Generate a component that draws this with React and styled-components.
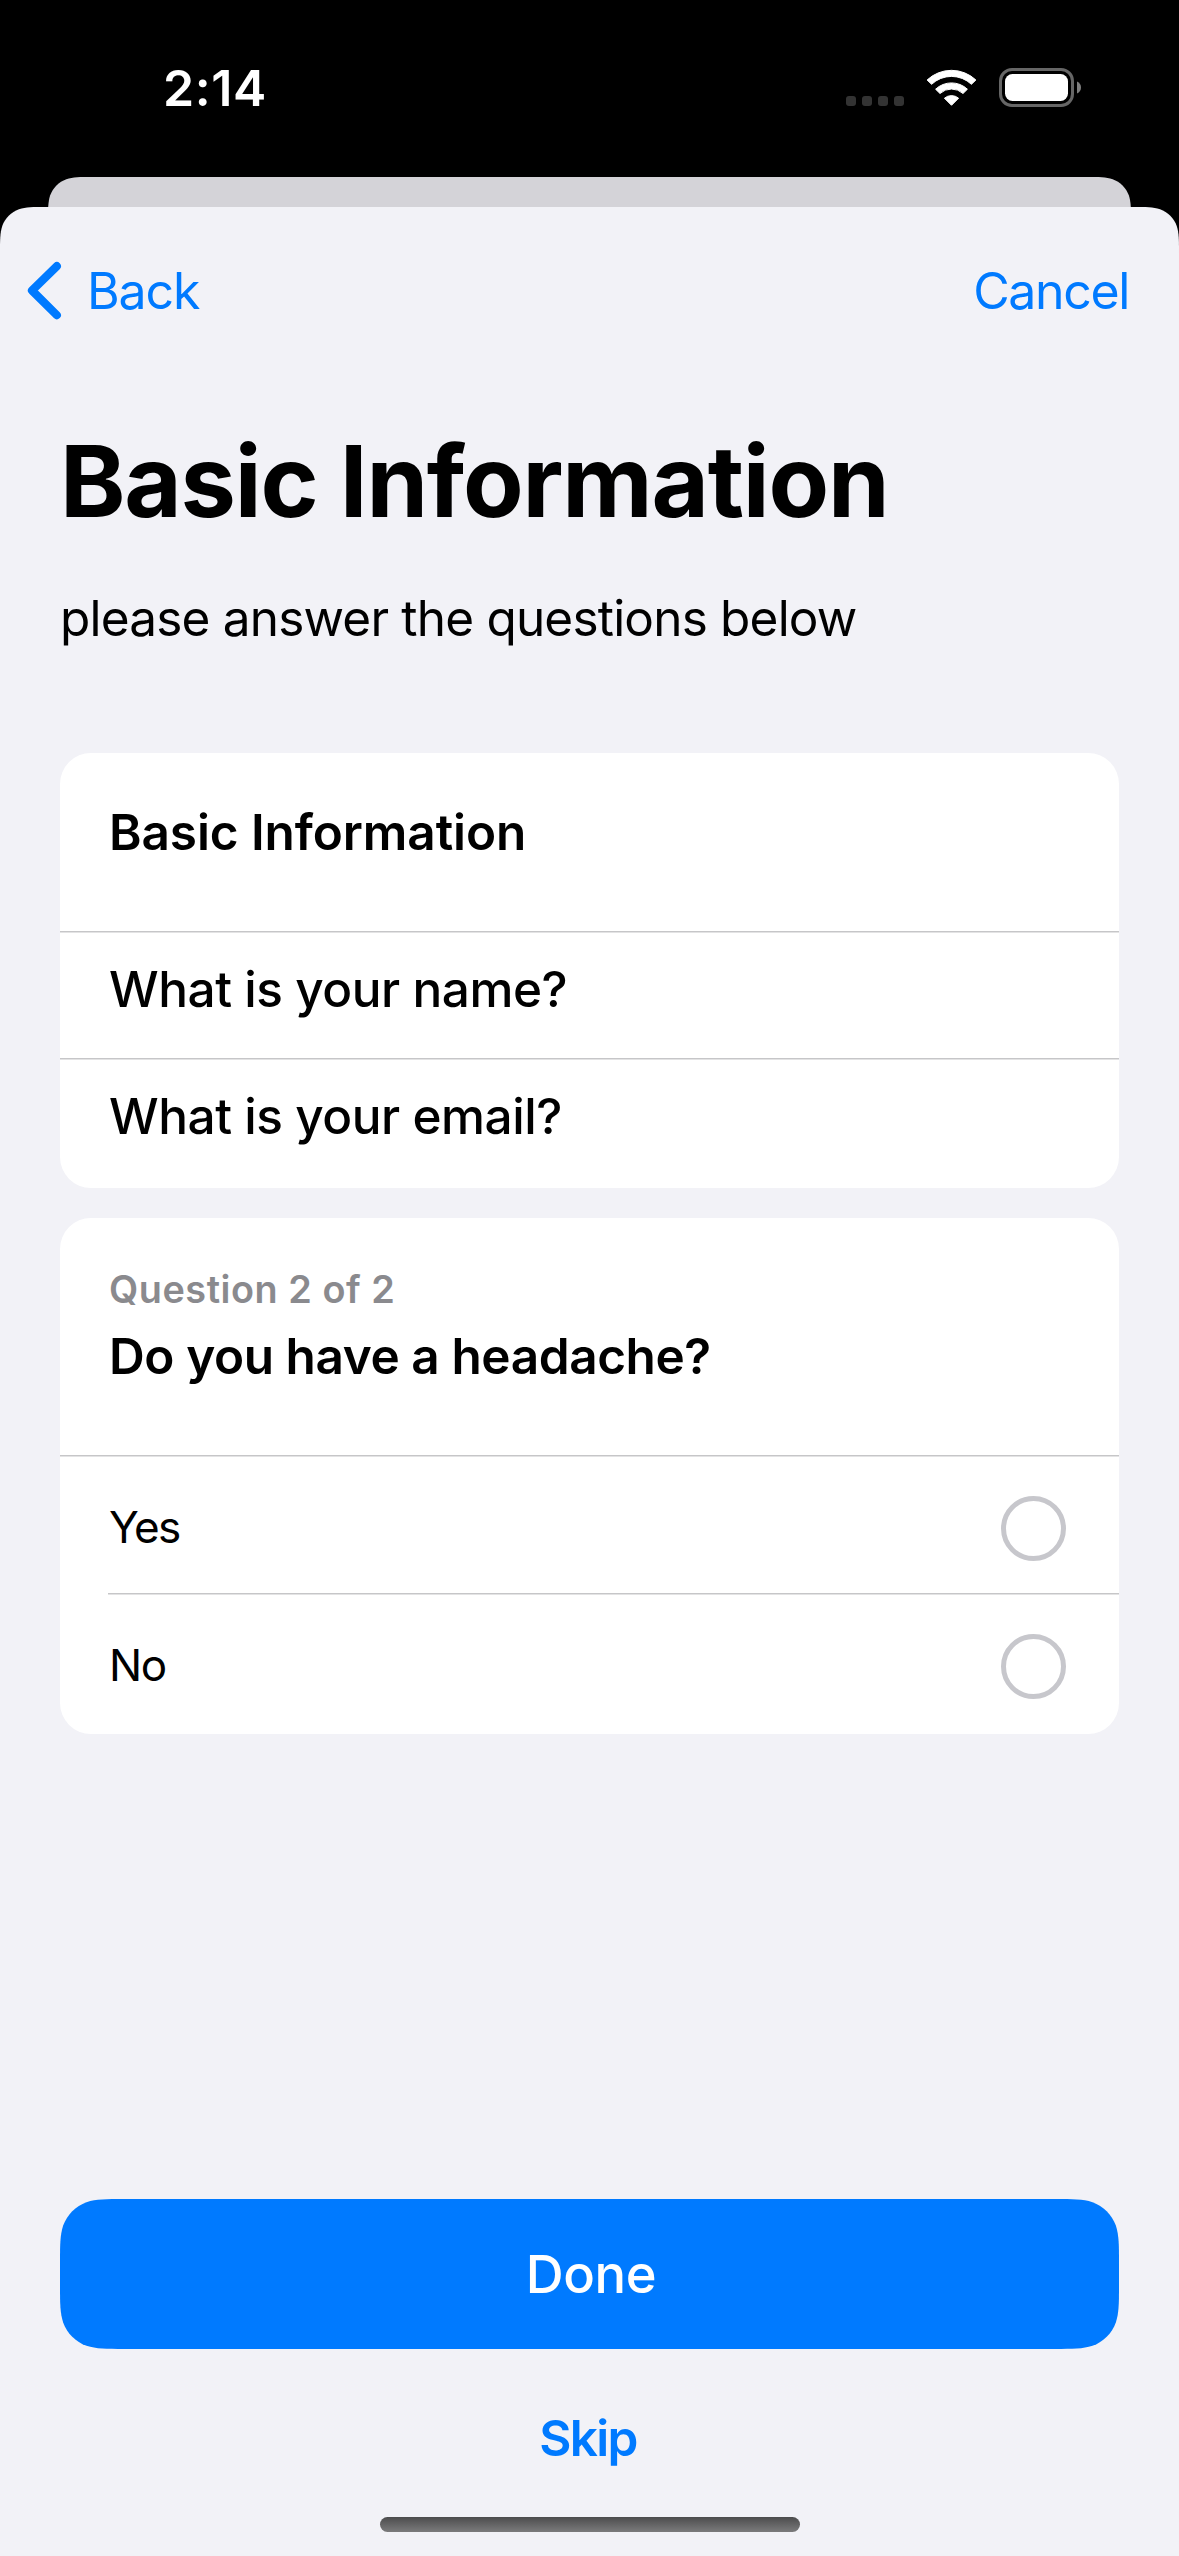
import React from "react";
import styled, { createGlobalStyle, css } from "styled-components";

const blue = "#007aff";
const sheetGrey = "#f2f2f7";

const GlobalStyle = createGlobalStyle`
  * { box-sizing: border-box; }
  body {
    margin: 0;
    background: #000;
    font-family: Inter, "Liberation Sans", sans-serif;
    color: #000;
  }
  h1, h2, p { margin: 0; font-weight: inherit; }
  button { font: inherit; border: 0; padding: 0; margin: 0; background: none; }
`;

// Rounded rectangle whose corners ease into the edges.
const smoothCorners = (w, h, r, roundBottom) => {
  const a = 1.528665 * r;
  const b = 1.08849296 * r;
  const c = 0.86840694 * r;
  const d = 0.63149379 * r;
  const e = 0.37282383 * r;
  const f = 0.16905956 * r;
  const g = 0.07491139 * r;
  const top =
    `M0 ${a}C0 ${b} 0 ${c} ${g} ${d}C${f} ${e} ${e} ${f} ${d} ${g}C${c} 0 ${b} 0 ${a} 0` +
    `L${w - a} 0C${w - b} 0 ${w - c} 0 ${w - d} ${g}C${w - e} ${f} ${w - f} ${e} ${w - g} ${d}C${w} ${c} ${w} ${b} ${w} ${a}`;
  const bottom = roundBottom
    ? `L${w} ${h - a}C${w} ${h - b} ${w} ${h - c} ${w - g} ${h - d}C${w - f} ${h - e} ${w - e} ${h - f} ${w - d} ${h - g}C${w - c} ${h} ${w - b} ${h} ${w - a} ${h}` +
      `L${a} ${h}C${b} ${h} ${c} ${h} ${d} ${h - g}C${e} ${h - f} ${f} ${h - e} ${g} ${h - d}C0 ${h - c} 0 ${h - b} 0 ${h - a}Z`
    : `L${w} ${h}L0 ${h}Z`;
  return css`clip-path: path("${top + bottom}");`;
};

const Screen = styled.div`
  width: 1179px;
  height: 2556px;
  display: flex;
  flex-direction: column;
  background: #000;
  overflow: hidden;
`;

const StatusBar = styled.header`
  height: 177px;
  flex: none;
  display: flex;
  justify-content: space-between;
  align-items: center;
  padding: 0 98px 1px 163px;
  color: #fff;
`;

const Clock = styled.time`
  font-size: 50px;
  font-weight: 600;
  line-height: 60px;
  letter-spacing: 0.6px;
`;

const StatusIcons = styled.div`
  display: flex;
  align-items: center;
`;

const SheetBehind = styled.div`
  height: 30px;
  flex: none;
  margin: 0 48px;
  background: #d4d3d8;
  ${smoothCorners(1083, 90, 29, false)}
`;

const Sheet = styled.main`
  flex: 1;
  display: flex;
  flex-direction: column;
  background: ${sheetGrey};
  ${smoothCorners(1179, 2349, 30, false)}
`;

const NavBar = styled.nav`
  height: 168px;
  flex: none;
  display: flex;
  justify-content: space-between;
  align-items: center;
  padding: 0 50px 0 27px;
`;

const NavButton = styled.button`
  display: flex;
  align-items: center;
  gap: 24px;
  color: ${blue};
  font-size: 50px;
  line-height: 60px;
  letter-spacing: ${(p) => p.$tracking}px;
`;

const Content = styled.section`
  display: flex;
  flex-direction: column;
  padding: 46px 60px 0;
`;

const Title = styled.h1`
  font-size: 99px;
  font-weight: 700;
  line-height: 120px;
  letter-spacing: -1.19px;
`;

const Subtitle = styled.p`
  margin-top: 47px;
  font-size: 49.5px;
  line-height: 60px;
  letter-spacing: -0.8px;
`;

const Cards = styled.div`
  display: flex;
  flex-direction: column;
  gap: 30px;
  margin-top: 105px;
`;

const Card = styled.section`
  display: flex;
  flex-direction: column;
  padding-bottom: 3px;
  border-radius: 31px;
  background: #fff;
`;

const CardHeader = styled.div`
  display: flex;
  flex-direction: column;
  gap: 14px;
  padding: ${(p) => (p.$counted ? "48px 49px 69px" : "49px 49px 69px")};
`;

const Counter = styled.p`
  color: #8a8a8e;
  font-size: 37.8px;
  font-weight: 600;
  line-height: 46px;
  letter-spacing: 0.55px;
`;

const Heading = styled.h2`
  font-size: 49.5px;
  font-weight: 600;
  line-height: 60px;
  letter-spacing: ${(p) => p.$tracking}px;
`;

const Separator = styled.div`
  height: 2px;
  margin-left: ${(p) => (p.$inset ? 48 : 0)}px;
  background: linear-gradient(#c6c6c8 50%, #e3e3e4 50%);
`;

const FieldRow = styled.div`
  padding: 26px 49px 39px;
  font-size: 49.5px;
  font-weight: 500;
  line-height: 60px;
  letter-spacing: -0.46px;
`;

const OptionRow = styled.label`
  display: flex;
  justify-content: space-between;
  align-items: center;
  padding: 39px 53px 32px 49px;
`;

const OptionLabel = styled.span`
  padding-bottom: 3px;
  font-size: 44px;
  line-height: 54px;
  letter-spacing: ${(p) => p.$tracking}px;
`;

const Radio = styled.span`
  width: 65px;
  height: 65px;
  border: 5px solid #c7c7cc;
  border-radius: 50%;
`;

const Footer = styled.footer`
  display: flex;
  flex-direction: column;
  align-items: center;
  margin-top: auto;
  padding: 0 60px 24px;
`;

const DoneButton = styled.button`
  width: 1059px;
  height: 150px;
  padding-left: 3px;
  background: ${blue};
  color: #fff;
  font-size: 52.5px;
  font-weight: 550;
  letter-spacing: -0.4px;
  ${smoothCorners(1059, 150, 42, true)}
`;

const SkipButton = styled.button`
  margin-top: 59px;
  padding-right: 3px;
  color: ${blue};
  font-size: 49.5px;
  font-weight: 600;
  line-height: 60px;
  letter-spacing: -1.7px;
`;

const HomeIndicator = styled.div`
  width: 420px;
  height: 15px;
  margin-top: 49px;
  border-radius: 8px;
  background: linear-gradient(#4c4c4d, #7b7b7c);
`;

const StatusGlyphs = () => (
  <svg width="236" height="40" viewBox="845 68 236 40">
    {[846, 862, 878, 894].map((x) => (
      <rect key={x} x={x} y="96" width="10" height="10" rx="3" fill="#333" />
    ))}
    <g fill="#fff" stroke="#fff" strokeWidth="1" strokeLinejoin="round">
      <path d="M927.1 80A35.6 35.6 0 0 1 975.9 80L971.4 84.3A29 29 0 0 0 931.6 84.3Z" />
      <path d="M935.6 89.2A23.2 23.2 0 0 1 967.4 89.2L963 93.5A17 17 0 0 0 940 93.5Z" />
      <path d="M944.4 98.2A11 11 0 0 1 958.6 98.2L951.5 105.3Z" />
    </g>
    <rect x="1000.5" y="69.5" width="72" height="36" rx="11.5" fill="none" stroke="#666" strokeWidth="3" />
    <rect x="1005" y="74" width="63" height="27" rx="7.5" fill="#fff" />
    <path d="M1077 81.5C1079.6 82.6 1081 84.9 1081 87.5S1079.6 92.4 1077 93.5Z" fill="#7f7f7f" />
  </svg>
);

const Chevron = () => (
  <svg width="36" height="60" viewBox="0 0 36 60" fill="none">
    <path
      d="M29.8 5.2L5 29.5L29.8 54.2"
      stroke={blue}
      strokeWidth="8.2"
      strokeLinecap="round"
      strokeLinejoin="round"
    />
  </svg>
);

const Option = ({ label, tracking }) => (
  <OptionRow>
    <OptionLabel $tracking={tracking}>{label}</OptionLabel>
    <Radio />
  </OptionRow>
);

export default function App() {
  return (
    <>
      <GlobalStyle />
      <Screen>
        <StatusBar>
          <Clock>2:14</Clock>
          <StatusIcons>
            <StatusGlyphs />
          </StatusIcons>
        </StatusBar>
        <SheetBehind />
        <Sheet>
          <NavBar>
            <NavButton $tracking={-1.09}>
              <Chevron />
              Back
            </NavButton>
            <NavButton $tracking={-1.35}>Cancel</NavButton>
          </NavBar>
          <Content>
            <Title>Basic Information</Title>
            <Subtitle>please answer the questions below</Subtitle>
            <Cards>
              <Card>
                <CardHeader>
                  <Heading $tracking={-0.09}>Basic Information</Heading>
                </CardHeader>
                <Separator />
                <FieldRow>What is your name?</FieldRow>
                <Separator />
                <FieldRow>What is your email?</FieldRow>
              </Card>
              <Card>
                <CardHeader $counted>
                  <Counter>Question 2 of 2</Counter>
                  <Heading $tracking={-0.41}>Do you have a headache?</Heading>
                </CardHeader>
                <Separator />
                <Option label="Yes" tracking={-1.6} />
                <Separator $inset />
                <Option label="No" tracking={-1.3} />
              </Card>
            </Cards>
          </Content>
          <Footer>
            <DoneButton>Done</DoneButton>
            <SkipButton>Skip</SkipButton>
            <HomeIndicator />
          </Footer>
        </Sheet>
      </Screen>
    </>
  );
}
